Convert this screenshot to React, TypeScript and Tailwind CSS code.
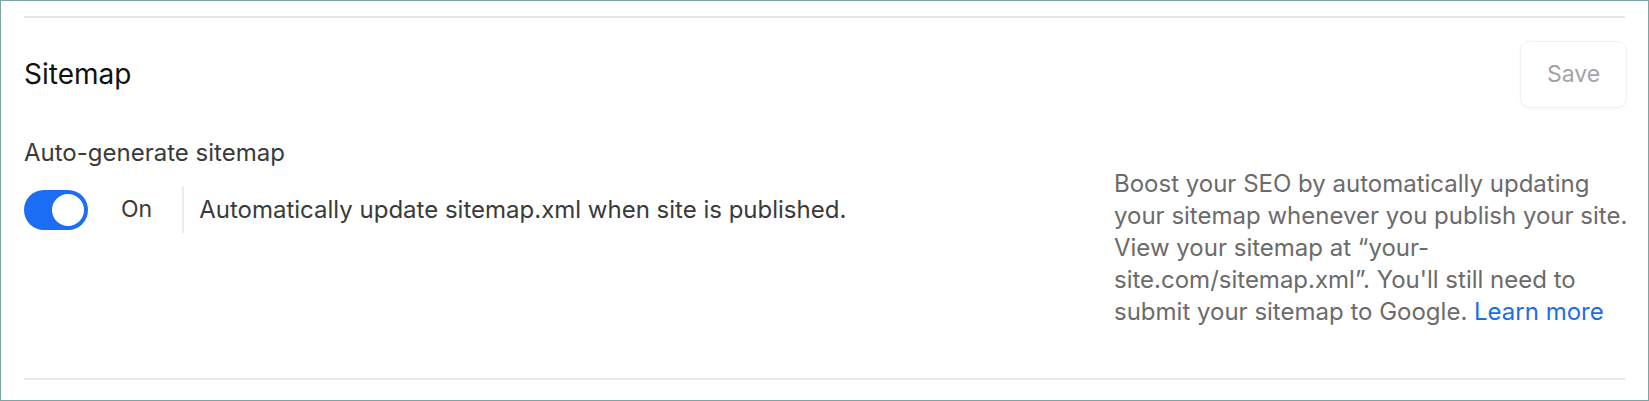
import { useState } from 'react'

function Toggle({ on, onChange }: { on: boolean; onChange: () => void }) {
  return (
    <button
      type="button"
      onClick={onChange}
      className={`flex h-[40px] w-[64px] shrink-0 items-center rounded-full p-[4px] transition ${
        on ? 'justify-end bg-[#1b6ef3]' : 'justify-start bg-[#d4d4d4]'
      }`}
    >
      <span className="h-[32px] w-[32px] rounded-full bg-white" />
    </button>
  )
}

export default function App() {
  const [autoSitemap, setAutoSitemap] = useState(true)

  return (
    <div className="box-border h-[401px] w-[1649px] border border-[#7ea5a3] bg-white px-[23px] pt-[15px] font-['Inter',sans-serif]">
      <div className="h-[2px] bg-[#e7e7e7]" />

      <div className="mt-[23px] flex items-center justify-between">
        <h2 className="mt-[-2px] text-[28px] leading-none text-[#111111]">Sitemap</h2>
        <button
          type="button"
          disabled
          className="mr-[-2px] h-[67px] w-[107px] rounded-[10px] border border-[#f2f2f2] bg-white text-[23px] text-[#a4a4a4] shadow-[0_1px_3px_rgba(0,0,0,0.04)]"
        >
          Save
        </button>
      </div>

      <div className="mt-[29px] flex justify-between">
        <div>
          <p className="text-[24px] leading-[32px] text-[#3a3a3a]">
            Auto-generate sitemap
          </p>
          <div className="mt-[17px] flex items-center">
            <Toggle on={autoSitemap} onChange={() => setAutoSitemap(!autoSitemap)} />
            <span className="ml-[33px] text-[23px] text-[#3a3a3a]">
              {autoSitemap ? 'On' : 'Off'}
            </span>
            <span className="ml-[30px] h-[47px] w-[2px] bg-[#ececec]" />
            <span className="ml-[15px] text-[24px] text-[#3a3a3a]">
              Automatically update sitemap.xml when site is published.
            </span>
          </div>
        </div>

        <p className="mr-[-9px] mt-[31px] w-[520px] text-[24px] leading-[32px] text-[#6b6b6b]">
          Boost your SEO by automatically updating your sitemap whenever you
          publish your site. View your sitemap at “your-site.com/sitemap.xml”.
          You'll still need to submit your sitemap to Google.{' '}
          <a href="#" className="text-[#1a6ee6]">
            Learn more
          </a>
        </p>
      </div>

      <div className="mt-[50px] h-[2px] bg-[#e7e7e7]" />
    </div>
  )
}
